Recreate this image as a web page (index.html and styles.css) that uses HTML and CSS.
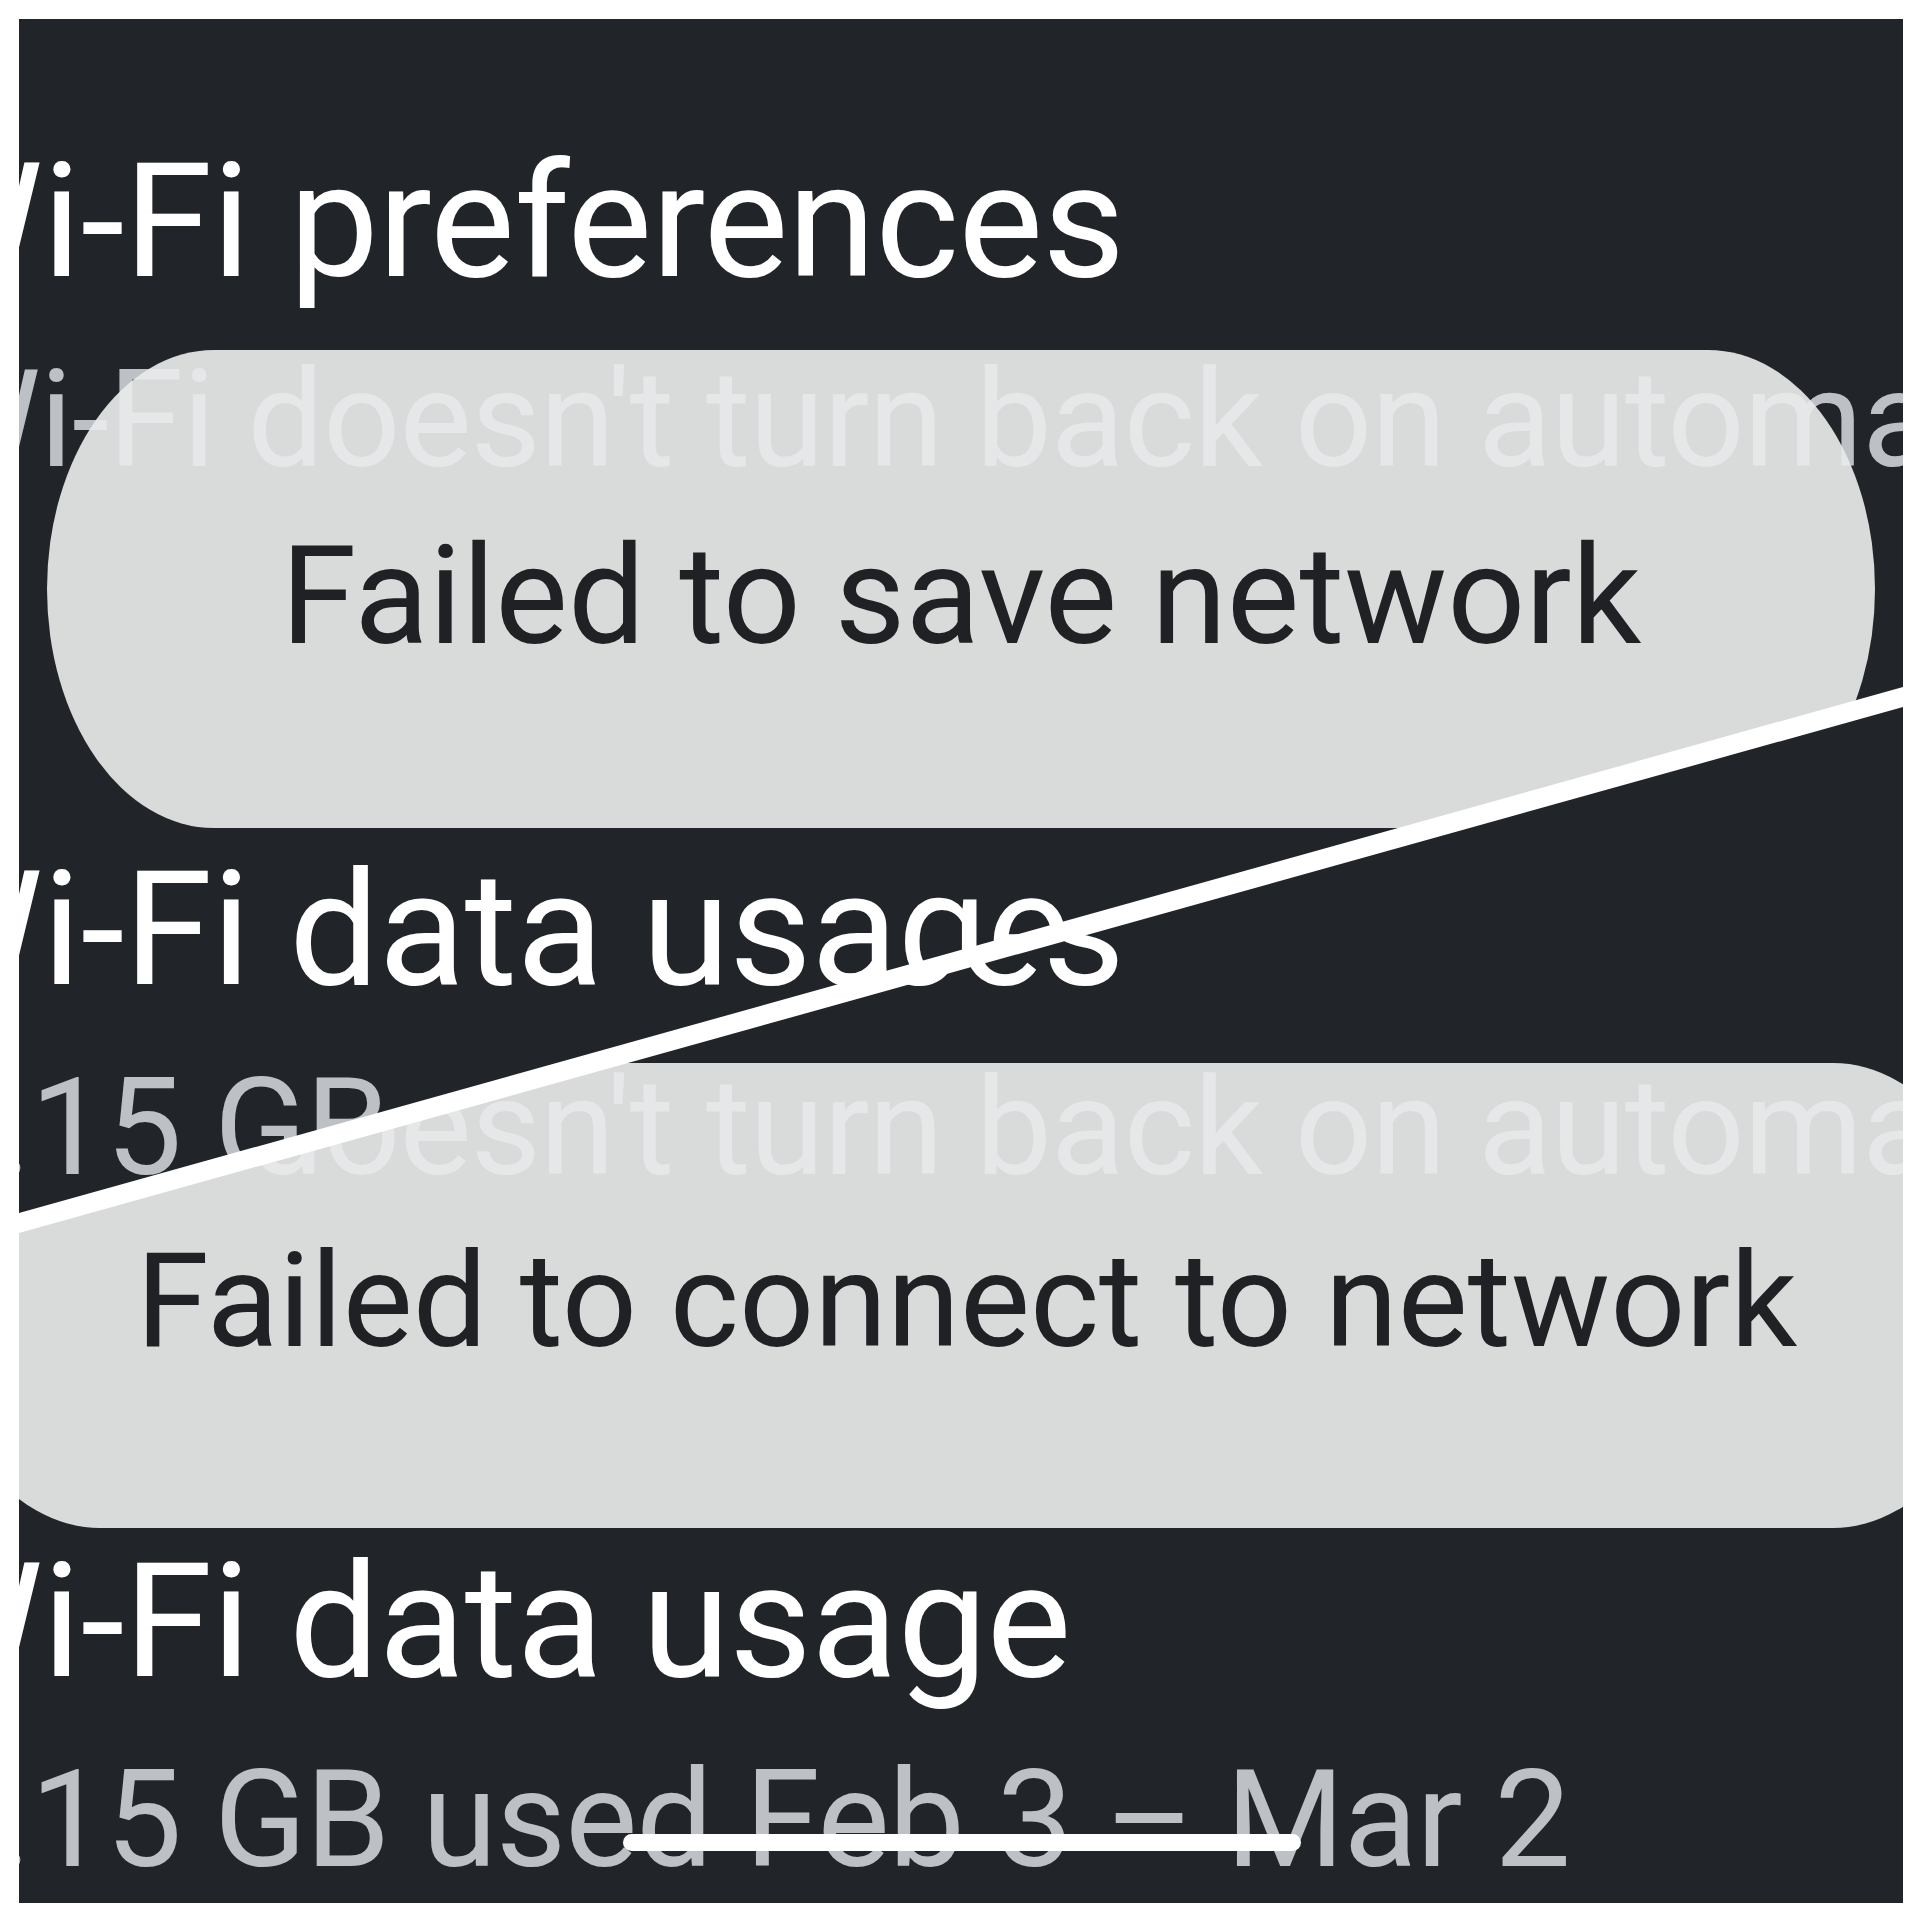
FILE: index.html
```html
<!DOCTYPE html>
<html lang="en">
<head>
    <meta charset="UTF-8">
    <meta name="viewport" content="width=device-width, initial-scale=1.0">
    <title>Wi-Fi toasts</title>
    <link rel="stylesheet" href="styles.css">
</head>
<body>
    <div class="collage">
        <!-- upper half: first capture -->
        <div class="screen screen-save">
            <div class="list">
                <div class="pref">
                    <div class="pref-title">Wi-Fi preferences</div>
                    <div class="pref-summary">Wi-Fi doesn't turn back on automatically</div>
                </div>
                <div class="pref">
                    <div class="pref-title">Wi-Fi data usage</div>
                    <div class="pref-summary">1.15 GB used Feb 3 – Mar 2</div>
                </div>
            </div>
            <div class="toast toast-save"><span>Failed to save network</span></div>
        </div>
        <!-- lower half: second capture -->
        <div class="screen screen-connect">
            <div class="list">
                <div class="pref">
                    <div class="pref-title">Wi-Fi preferences</div>
                    <div class="pref-summary">Wi-Fi doesn't turn back on automatically</div>
                </div>
                <div class="pref">
                    <div class="pref-title">Wi-Fi data usage</div>
                    <div class="pref-summary">1.15 GB used Feb 3 – Mar 2</div>
                </div>
            </div>
            <div class="toast toast-connect"><span>Failed to connect to network</span></div>
            <div class="nav-handle"></div>
        </div>
        <svg class="divider" width="1884" height="1884" viewBox="0 0 1884 1884">
            <polygon points="0,1194 1884,668 1884,688 0,1214" fill="#ffffff"/>
        </svg>
    </div>
</body>
</html>
```

FILE: styles.css
```css
html,body{margin:0;padding:0;background:#fff;}
body{font-family:Roboto,"Noto Sans",sans-serif;}

.collage{
    position:relative;
    width:1884px;
    height:1884px;
    margin:19px;
    overflow:hidden;
    background:#212529;
}
.screen{
    position:absolute;
    top:0;left:0;right:0;bottom:0;
    overflow:hidden;
    background:#212529;
}
.screen-save{clip-path:polygon(0 0,100% 0,100% 678px,0 1204px);}
.screen-connect{clip-path:polygon(0 1204px,100% 678px,100% 100%,0 100%);}

.list{
    display:flex;
    flex-direction:column;
    margin-left:-118px;
    white-space:nowrap;
}
.screen-save .list{margin-top:-53px;}
.screen-connect .list{margin-top:655px;}
.pref{padding:156px 0;}
.screen-connect .pref + .pref{padding-top:140px;}
.pref-title{font-size:160px;line-height:200px;color:#fff;letter-spacing:-0.7px;}
.pref-summary{
    font-size:136px;
    line-height:196px;
    letter-spacing:-1px;
    margin-left:19px;
    color:#bdc1c6;
}

.toast{
    position:absolute;
    display:flex;
    justify-content:center;
    align-items:center;
    box-sizing:border-box;
    background:rgba(233,234,234,0.92);
    color:#202124;
    white-space:nowrap;
}
.toast-save{
    left:28px;top:331px;
    width:1828px;height:478px;
    border-radius:167px / 239px;
    padding-top:14px;
    font-size:137px;
}
.toast-connect{
    left:-86px;top:1044px;
    width:2067px;height:465px;
    border-radius:167px / 232px;
    padding-top:10px;
    font-size:132px;
}
.nav-handle{
    position:absolute;
    left:604px;top:1815px;
    width:678px;height:17px;
    border-radius:9px;
    background:#fff;
}
.divider{position:absolute;top:0;left:0;}
```
